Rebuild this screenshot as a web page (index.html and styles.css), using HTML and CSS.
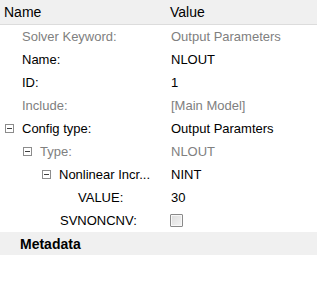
FILE: index.html
```html
<!DOCTYPE html>
<html lang="en">
<head>
    <meta charset="UTF-8">
    <title>Properties</title>
    <link rel="stylesheet" href="styles.css">
</head>
<body>
    <div class="grid">
        <div class="head">
            <div class="col-name">Name</div>
            <div class="col-value">Value</div>
        </div>

        <div class="row muted">
            <div class="col-name lvl0">Solver Keyword:</div>
            <div class="col-value">Output Parameters</div>
        </div>
        <div class="row">
            <div class="col-name lvl0">Name:</div>
            <div class="col-value">NLOUT</div>
        </div>
        <div class="row">
            <div class="col-name lvl0">ID:</div>
            <div class="col-value">1</div>
        </div>
        <div class="row muted">
            <div class="col-name lvl0">Include:</div>
            <div class="col-value">[Main Model]</div>
        </div>
        <div class="row">
            <div class="col-name tree0"><span class="toggle"></span>Config type:</div>
            <div class="col-value">Output Paramters</div>
        </div>
        <div class="row muted">
            <div class="col-name tree1"><span class="toggle"></span>Type:</div>
            <div class="col-value">NLOUT</div>
        </div>
        <div class="row">
            <div class="col-name tree2"><span class="toggle"></span>Nonlinear Incr...</div>
            <div class="col-value">NINT</div>
        </div>
        <div class="row">
            <div class="col-name lvl3">VALUE:</div>
            <div class="col-value">30</div>
        </div>
        <div class="row">
            <div class="col-name lvl2">SVNONCNV:</div>
            <div class="col-value"><span class="check"></span></div>
        </div>

        <div class="section">Metadata</div>
    </div>
</body>
</html>
```

FILE: styles.css
```css
* { margin: 0; padding: 0; box-sizing: border-box; }
body {
    font-family: "Liberation Sans", Arial, sans-serif;
    font-size: 13px;
    color: #000;
    background: #fff;
}
.grid { width: 317px; }
.head {
    display: flex;
    height: 25px;
    align-items: center;
    background: #f0f0f0;
    border-bottom: 1px solid #dcdcdc;
    font-size: 14px;
}
.head .col-name { padding-left: 4px; }
.head .col-value { margin-left: -1px; }
.row {
    display: flex;
    height: 23px;
    align-items: center;
}
.col-name {
    width: 171px;
    display: flex;
    align-items: center;
    white-space: nowrap;
}
.col-value { flex: 1; display: flex; align-items: center; }
.muted { color: #808080; }
.lvl0 { padding-left: 22px; }
.lvl2 { padding-left: 60px; }
.lvl3 { padding-left: 78px; }
.tree0 { padding-left: 5px; }
.tree1 { padding-left: 23px; }
.tree2 { padding-left: 42px; }
.toggle {
    position: relative;
    width: 9px;
    height: 9px;
    border: 1px solid #8c8c8c;
    background: #fff;
    margin-right: 8px;
}
.toggle::after {
    content: "";
    position: absolute;
    left: 1px;
    right: 1px;
    top: 3px;
    height: 1px;
    background: #404040;
}
.check {
    width: 13px;
    height: 13px;
    margin-left: -1px;
    border: 1px solid #8a8a8a;
    border-radius: 1px;
    background: linear-gradient(135deg, #dcdcdc 0%, #f4f4f4 100%);
    box-shadow: inset 0 0 0 1px #f8f8f8;
}
.section {
    height: 23px;
    display: flex;
    align-items: center;
    padding-left: 20px;
    background: #f0f0f0;
    font-weight: bold;
    font-size: 14px;
}
```
